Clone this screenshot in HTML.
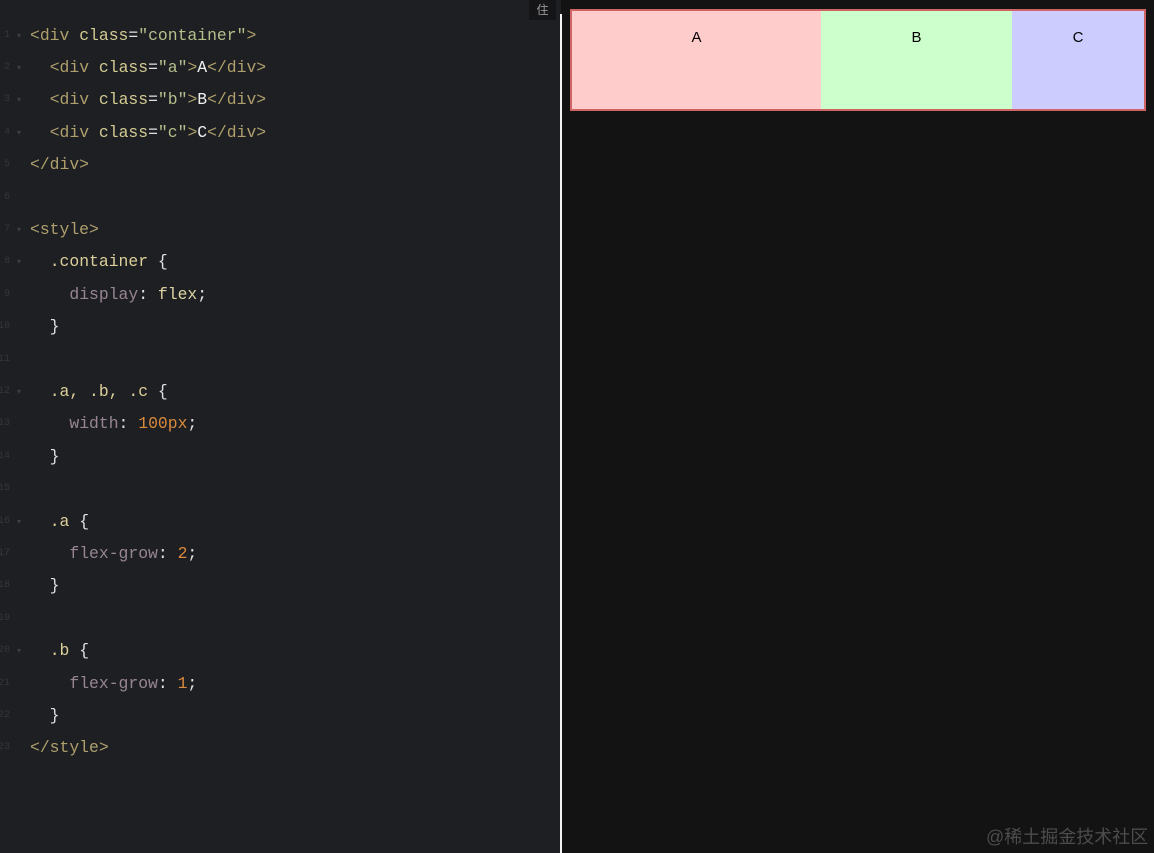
<!DOCTYPE html>
<html><head><meta charset="utf-8"><style>
body{margin:0;width:1154px;height:853px;background:#131313;position:relative;overflow:hidden;font-family:"Liberation Sans",sans-serif}
#left{position:absolute;left:0;top:0;width:561px;height:853px;background:#1e1f23}
#code{position:absolute;left:30px;top:19.5px;font-family:"Liberation Mono",monospace;font-size:16.4px;line-height:32.4px;white-space:pre;color:#e0e0e0}
#nums{position:absolute;left:-4px;top:19.5px;font-family:"Liberation Mono",monospace;font-size:10px;line-height:32.4px;white-space:pre;color:#35363b;text-align:right;width:14px}
#folds{position:absolute;left:17px;top:19.5px;font-size:8px;line-height:32.4px;white-space:pre;color:#3e3f44}
.t{color:#ae9f6c}.at{color:#d3cb93}.s{color:#b4bf8c}.p{color:#978593}.v{color:#dcd4a2}.n{color:#d98a3c}.sel{color:#dcd09a}.w{color:#f0f0f0}
#div{position:absolute;left:560px;top:14px;width:2px;height:839px;background:#f4f4f4}
#tab{position:absolute;left:529px;top:0;width:27px;height:20px;background:#151517;color:#9a9a9a;font-family:"Noto Sans CJK SC",sans-serif;font-size:12px;text-align:center;line-height:20px}
#box{position:absolute;left:570px;top:9px;width:572px;height:98px;border:2px solid #d06464;display:flex}
#box div{text-align:center;font-size:15px;padding-top:18px;color:#000}
#wm{position:absolute;left:986px;top:823px;color:#4c4c4c;font-family:"Liberation Sans","Noto Sans CJK SC",sans-serif;font-size:18px}
</style></head><body>
<div id="left">
<div id="nums">1
2
3
4
5
6
7
8
9
10
11
12
13
14
15
16
17
18
19
20
21
22
23</div>
<div id="folds">▾
▾
▾
▾


▾
▾



▾



▾



▾</div>
<div id="code"><span class="t">&lt;div</span> <span class="at">class</span>=<span class="s">"container"</span><span class="t">&gt;</span>
  <span class="t">&lt;div</span> <span class="at">class</span>=<span class="s">"a"</span><span class="t">&gt;</span><span class="w">A</span><span class="t">&lt;/div&gt;</span>
  <span class="t">&lt;div</span> <span class="at">class</span>=<span class="s">"b"</span><span class="t">&gt;</span><span class="w">B</span><span class="t">&lt;/div&gt;</span>
  <span class="t">&lt;div</span> <span class="at">class</span>=<span class="s">"c"</span><span class="t">&gt;</span><span class="w">C</span><span class="t">&lt;/div&gt;</span>
<span class="t">&lt;/div&gt;</span>

<span class="t">&lt;style&gt;</span>
  <span class="sel">.container</span> {
    <span class="p">display</span>: <span class="v">flex</span>;
  }

  <span class="sel">.a, .b, .c</span> {
    <span class="p">width</span>: <span class="n">100px</span>;
  }

  <span class="sel">.a</span> {
    <span class="p">flex-grow</span>: <span class="n">2</span>;
  }

  <span class="sel">.b</span> {
    <span class="p">flex-grow</span>: <span class="n">1</span>;
  }
<span class="t">&lt;/style&gt;</span></div>
<div id="tab">住</div>
</div>
<div id="div"></div>
<div id="box"><div style="width:249px;background:#ffcccc">A</div><div style="width:191px;background:#ccffcc">B</div><div style="width:132px;background:#ccccff">C</div></div>
<div id="wm">@稀土掘金技术社区</div>
</body></html>
